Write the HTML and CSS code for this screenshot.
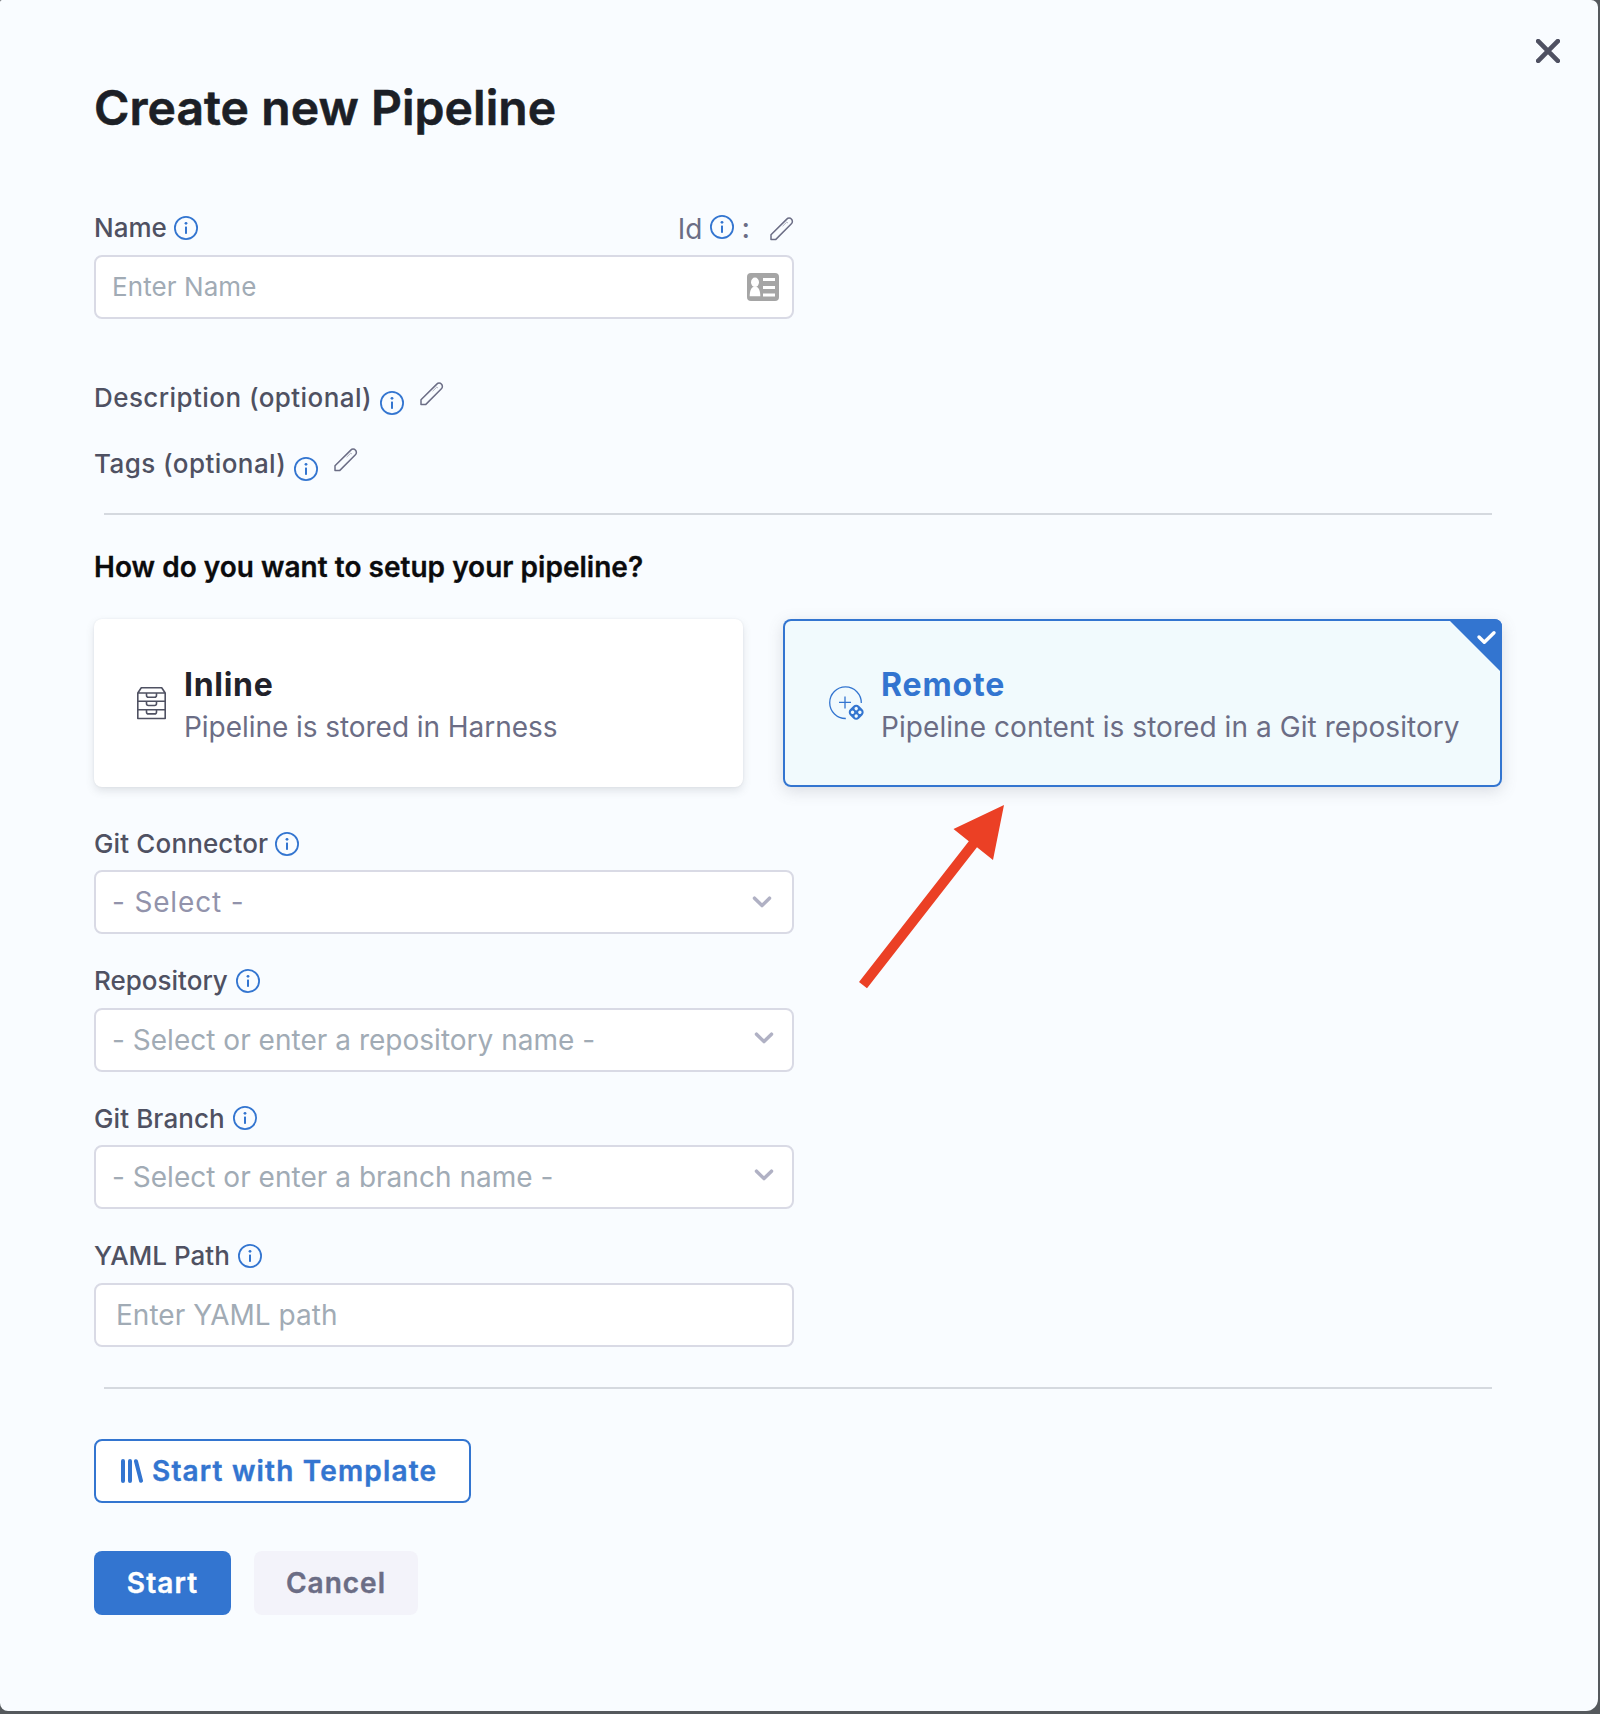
FILE: index.html
```html
<!DOCTYPE html>
<html lang="en">
<head>
<meta charset="utf-8">
<title>Create new Pipeline</title>
<link rel="stylesheet" href="styles.css">
</head>
<body>
<svg class="defs" aria-hidden="true">
  <symbol id="info" viewBox="0 0 24 24"><circle cx="12" cy="12" r="11.100" fill="none" stroke="currentColor" stroke-width="1.800"/><rect x="11" y="10.600" width="2" height="7.200" fill="currentColor"/><circle cx="12" cy="7.300" r="1.400" fill="currentColor"/></symbol>
  <symbol id="pencil" viewBox="0 0 24 24"><path d="M1 22.600v-4.800L16.800 2.100a3.200 3.200 0 0 1 4.600 0 3.200 3.200 0 0 1 0 4.600L5.600 22.600z" fill="none" stroke="currentColor" stroke-width="1.500" stroke-linejoin="round"/><path d="M12.600 9.200l4.200-4.100 1.200 1" fill="none" stroke="currentColor" stroke-width="1" opacity=".5"/></symbol>
  <symbol id="chevron" viewBox="0 0 20 12"><path d="M2.500 2.200L10 9.600l7.500-7.400" fill="none" stroke="currentColor" stroke-width="3.500" stroke-linecap="round" stroke-linejoin="round"/></symbol>
</svg>
<main class="modal">
  <button class="close" aria-label="Close"><svg width="24" height="24" viewBox="0 0 24 24"><path d="M2.200 2.200l19.600 19.600M21.800 2.200L2.200 21.800" stroke="currentColor" stroke-width="4.700" stroke-linecap="round"/></svg></button>
  <h1 class="title">Create new Pipeline</h1>

  <div class="label name-row">
    <span>Name</span><svg class="info"><use href="#info"/></svg>
    <span class="id">Id</span><svg class="info id-info"><use href="#info"/></svg><span class="colon">:</span><svg class="pencil"><use href="#pencil"/></svg>
  </div>
  <div class="input name-input"><span class="name-hint">Enter Name</span>
    <svg class="card-icon" width="32" height="28" viewBox="0 0 32 28"><rect width="32" height="28" rx="4" fill="#a5a5a5"/><g fill="#fff"><ellipse cx="8" cy="9.300" rx="4" ry="4.800"/><path d="M2.700 23.200c0-5 1.400-8.700 3.700-9.200h3.200c2.300.5 3.700 4.200 3.700 9.200z"/><path d="M16 5h12v3H16zM16 13h12v3H16zM16 20.500h12v3H16z"/></g></svg>
  </div>

  <div class="label optional desc"><span>Description (optional)</span><svg class="info"><use href="#info"/></svg><svg class="pencil"><use href="#pencil"/></svg></div>
  <div class="label optional tags"><span>Tags (optional)</span><svg class="info"><use href="#info"/></svg><svg class="pencil"><use href="#pencil"/></svg></div>
  <hr class="rule">

  <h2 class="question">How do you want to setup your pipeline?</h2>
  <div class="cards">
    <div class="card inline">
      <svg class="drawer" width="30" height="34" viewBox="0 0 30 34" fill="none" stroke="#4f5162" stroke-width="1.600" stroke-linejoin="round"><path d="M.8 7v25.500h27.400V7L24.700 1.700H4.300zM.8 7h27.400M.8 15.300h27.400M.8 23.700h27.400M9.500 7v2.200q0 2 2 2h6q2 0 2-2V7M9.500 15.300v2.200q0 2 2 2h6q2 0 2-2v-2.200M9.500 23.700v2.200q0 2 2 2h6q2 0 2-2v-2.200"/></svg>
      <div><div class="card-title">Inline</div><div class="card-sub">Pipeline is stored in Harness</div></div>
    </div>
    <div class="card remote">
      <svg class="remote-icon" width="36" height="35" viewBox="0 0 36 35" fill="none" stroke="#3375d0"><path d="M16.800 32.500A15.800 15.800 0 1 1 32.300 17M16 10.500v12M10 16.300h12" stroke-width="1.300"/><g transform="rotate(45 27.200 26.300)"><rect x="20.700" y="19.800" width="13" height="13" rx="4.200" fill="#3375d0" stroke="none"/><g fill="#f1fafd" stroke="none"><circle cx="24.600" cy="23.700" r="1.700"/><circle cx="29.800" cy="23.700" r="1.700"/><circle cx="24.600" cy="28.900" r="1.700"/><circle cx="29.800" cy="28.900" r="1.700"/></g></g></svg>
      <div><div class="card-title">Remote</div><div class="card-sub">Pipeline content is stored in a Git repository</div></div>
      <svg class="corner" width="54" height="54" viewBox="0 0 54 54"><path d="M0 0h46q8 0 8 8v46z" fill="#3375d0"/><path d="M31 18l5.300 5.300 9.700-9.600" fill="none" stroke="#fff" stroke-width="3.400" stroke-linecap="round" stroke-linejoin="round"/></svg>
    </div>
    <svg class="arrow" width="146" height="184" viewBox="0 0 146 184" fill="#eb4025"><path d="M146 0l-11 55-16-12.800L9 183.200 1 177 110.800 36.200 95.500 24z"/></svg>
  </div>

  <div class="fields">
    <div class="field connector"><div class="label"><span>Git Connector</span><svg class="info"><use href="#info"/></svg></div>
      <div class="input picker"><span>- Select -</span><svg class="chevron"><use href="#chevron"/></svg></div></div>
    <div class="field"><div class="label"><span>Repository</span><svg class="info"><use href="#info"/></svg></div>
      <div class="input combo"><span>- Select or enter a repository name -</span><svg class="chevron"><use href="#chevron"/></svg></div></div>
    <div class="field branch"><div class="label"><span>Git Branch</span><svg class="info"><use href="#info"/></svg></div>
      <div class="input combo"><span>- Select or enter a branch name -</span><svg class="chevron"><use href="#chevron"/></svg></div></div>
    <div class="field yaml"><div class="label"><span>YAML Path</span><svg class="info"><use href="#info"/></svg></div>
      <div class="input path"><span>Enter YAML path</span></div></div>
  </div>
  <hr class="rule rule-bottom">

  <button class="btn template"><svg width="23" height="24" viewBox="0 0 23 24" fill="none" stroke="currentColor" stroke-width="4" stroke-linecap="round"><path d="M2 2v20M9 2v20M15 2.200l5 19.600"/></svg><span>Start with Template</span></button>
  <div class="actions"><button class="btn start">Start</button><button class="btn cancel">Cancel</button></div>
</main>
</body>
</html>
```
FILE: styles.css
```css
* { box-sizing: border-box; }
body { margin: 0; background: #55595d; font-family: Inter, sans-serif; color: #4f5162; }
button { font-family: inherit; margin: 0; padding: 0; border: 0; background: none; }
svg { display: block; flex: none; }
.defs { position: absolute; width: 0; height: 0; }

.modal { position: relative; width: 1598px; height: 1711px; padding: 78px 96px 0 94px; background: #f9fcff; border-radius: 2px 7px 12px 8px; overflow: hidden; }
.close { position: absolute; top: 39px; right: 38px; color: #4f5162; }
.title { margin: 0 0 73px; font-size: 48px; line-height: 60px; font-weight: 600; letter-spacing: .07px; color: #1c1f26; white-space: nowrap; -webkit-text-stroke: .6px currentColor; }

.label { display: flex; align-items: center; height: 32px; font-size: 26px; font-weight: 500; white-space: nowrap; }
.info { width: 24px; height: 24px; margin-left: 8px; color: #3375d0; }
.pencil { width: 24px; height: 24px; color: #6b6d85; }
.name-row { width: 700px; }
.name-row .info { margin: 2px 0 0 7px; }
.id { margin-left: auto; font-size: 28px; font-weight: 400; color: #6b6d85; position: relative; top: 2px; }
.name-row .id-info { margin: 0 0 0 7px; }
.colon { margin: 2px 20px 0 8px; font-size: 28px; color: #6b6d85; }
.name-row .pencil { margin-top: 4px; }

.input { display: flex; align-items: center; justify-content: space-between; width: 700px; height: 64px; padding: 0 20px 0 16px; border: 2px solid #d9dae5; border-radius: 8px; background: #fff; font-size: 28px; color: #a1abb5; white-space: nowrap; }
.name-input { margin-top: 12px; padding-right: 13px; font-size: 26px; letter-spacing: .08px; }
.name-hint { margin-top: -2px; }

.optional { letter-spacing: .43px; }
.optional span { margin-top: -2px; }
.optional .info { position: relative; top: 5px; }
.optional .pencil { margin: -9px 0 0 16px; }
.desc { margin-top: 63px; }
.tags { margin-top: 34px; }
.rule { height: 2px; margin: 33px 10px 0 10px; border: 0; background: #d5d9df; }
.question { margin: 32px 0; font-size: 28px; line-height: 40px; font-weight: 600; letter-spacing: .02px; color: #0b0b0d; white-space: nowrap; -webkit-text-stroke: .3px currentColor; }

.cards { position: relative; display: flex; gap: 40px; height: 168px; }
.card { position: relative; display: flex; border-radius: 8px; box-shadow: 0 4px 8px rgba(96, 97, 112, .16), 0 0 2px rgba(40, 41, 61, .08); white-space: nowrap; padding-top: 46px; }
.inline { width: 649px; padding-left: 43px; background: #fff; }
.remote { width: 719px; padding-left: 46px; background: #f1fafd; box-shadow: inset 0 0 0 2px #3375d0, 0 4px 16px rgba(96, 97, 112, .2); }
.drawer { margin: 21px 17px 0 0; }
.remote-icon { margin: 21px 16px 0 0; }
.card-title { font-size: 32px; line-height: 40px; font-weight: 700; letter-spacing: .7px; color: #22222a; }
.remote .card-title { color: #3375d0; letter-spacing: .85px; }
.card-sub { margin-top: 2px; font-size: 28px; line-height: 40px; letter-spacing: -.05px; color: #6b6d85; }
.remote .card-sub { letter-spacing: .065px; }
.corner { position: absolute; top: 0; right: 0; }
.arrow { position: absolute; left: 764px; top: 186px; }

.fields { margin-top: 40.33px; display: flex; flex-direction: column; gap: 31px; }
.field .label { margin-bottom: 10.67px; }
.connector .label { letter-spacing: .14px; }
.connector .info { margin: 2px 0 0 7px; }
.branch .label { letter-spacing: .1px; }
.yaml .label span, .branch .info { position: relative; top: -.5px; }
.picker { color: #9293ab; letter-spacing: .83px; }
.chevron { width: 20px; height: 12px; color: #b0b1c4; }
.combo { padding-right: 18px; letter-spacing: .02px; }
.combo .chevron { margin-top: -4px; }
.path { padding-left: 20px; letter-spacing: .03px; }
.rule-bottom { margin-top: 40px; }

.btn { display: flex; align-items: center; justify-content: center; height: 64px; border-radius: 8px; font-size: 28px; font-weight: 600; letter-spacing: 1.1px; white-space: nowrap; -webkit-text-stroke: .4px currentColor; }
.template { width: 377px; margin-top: 50px; padding-left: 25px; justify-content: flex-start; gap: 8px; letter-spacing: 1.17px; border: 2px solid #3375d0; background: #fff; color: #3375d0; }
.actions { display: flex; gap: 23px; margin-top: 48px; }
.start { width: 137px; background: #3375d0; color: #fff; }
.cancel { width: 164px; background: #f3f3fa; color: #6b6d85; letter-spacing: 1px; }
```
